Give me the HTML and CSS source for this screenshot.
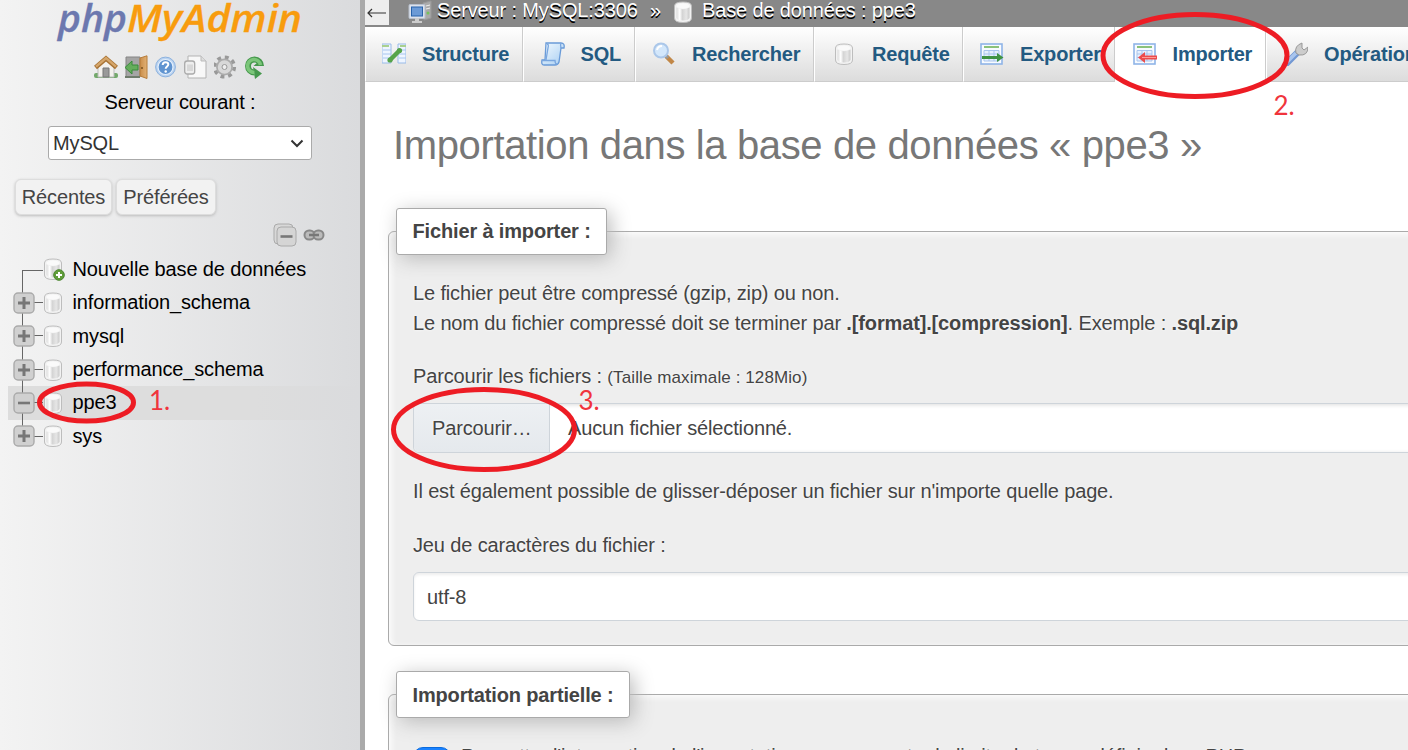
FILE: index.html
```html
<!DOCTYPE html>
<html lang="fr">
<head>
<meta charset="utf-8">
<title>phpMyAdmin</title>
<link rel="stylesheet" href="styles.css">
</head>
<body>
<svg class="defs" width="0" height="0">
  <defs>
    <linearGradient id="cyl" x1="0" x2="1"><stop offset="0" stop-color="#dcdcdc"/><stop offset=".25" stop-color="#fff"/><stop offset=".45" stop-color="#d4d4d4"/><stop offset=".75" stop-color="#e6e6e6"/><stop offset="1" stop-color="#cacaca"/></linearGradient>
    <linearGradient id="blue" x1="0" x2="1" y2="1"><stop offset="0" stop-color="#f4fbff"/><stop offset="1" stop-color="#a6cdf2"/></linearGradient>
    <linearGradient id="door" x1="0" x2="1"><stop offset="0" stop-color="#c98d4a"/><stop offset="1" stop-color="#e2b276"/></linearGradient>
    <symbol id="db" viewBox="0 0 24 24"><path d="M3.500 6Q3.500 2 12 2T20.500 6V18Q20.500 22.500 12 22.500T3.500 18Z" fill="#f2f2f2" stroke="#bdbdbd"/><path d="M5.500 7.500Q12 11 18.500 7.500V18Q17 20.500 12 20.500T5.500 18Z" fill="url(#cyl)"/><ellipse cx="12" cy="6" rx="6.500" ry="2.600" fill="#fafafa"/></symbol>
    <symbol id="plus" viewBox="0 0 22 22"><rect x="1" y="1" width="20" height="20" rx="4" fill="#d0d0d0" stroke="#aaa" stroke-width="1.400"/><path d="M5 11H17M11 5V17" stroke="#777" stroke-width="3"/></symbol>
    <symbol id="minus" viewBox="0 0 22 22"><rect x="1" y="1" width="20" height="20" rx="4" fill="#d0d0d0" stroke="#aaa" stroke-width="1.400"/><path d="M5 11H17" stroke="#777" stroke-width="2.600"/></symbol>
    <symbol id="sheet" viewBox="0 0 24 24"><rect x="1" y="2" width="21" height="20" fill="#f8fbff" stroke="#8fb5e8" stroke-width="1.600"/><path d="M4 5H19" stroke="#8bc27b" stroke-width="2"/><path d="M4 8.500H19V19H4ZM4 12H19M4 15.500H19M9 8.500V19M14 8.500V19" stroke="#a9c5ee" fill="#e6f0fd"/></symbol>
  </defs>
</svg>
<div class="app">
  <aside class="sidebar">
    <svg class="logo" width="360" height="42" viewBox="0 0 360 42"><text class="php" x="58" y="31.500" textLength="69" lengthAdjust="spacingAndGlyphs">php</text><text class="adm" x="127" y="31.500" textLength="175" lengthAdjust="spacingAndGlyphs">MyAdmin</text></svg>
    <div class="tools">
      <svg viewBox="0 0 24 24"><rect x="0" y="18" width="24" height="5" rx="2" fill="#73a96b"/><path d="M4 11L12 4L20 11V22H4Z" fill="#f3f1ed" stroke="#bbb"/><path d="M9 13H15V22H9Z" fill="#999" stroke="#777"/><path d="M1.500 12.500L12 3.500L22.500 12.500" fill="none" stroke="#a87335" stroke-width="4.500"/><path d="M2 11.700L12 3L22 11.700" fill="none" stroke="#d5a66b" stroke-width="2.400"/></svg>
      <svg viewBox="0 0 24 24"><path d="M2 2H16V22H2Z" fill="#a5a5a5" stroke="#858585"/><path d="M1 21H16V23H1Z" fill="#6f7c6c"/><path d="M1 12.500L8 6V10H14V15H8V19Z" fill="#64ad5b" stroke="#388b3b"/><path d="M16 3L23 .8V23.500L16 21Z" fill="url(#door)" stroke="#b67c3b"/><circle cx="18" cy="13" r="1" fill="#77501e"/></svg>
      <svg viewBox="0 0 24 24"><circle cx="11.500" cy="12" r="9.900" fill="#b9d2ef" stroke="#8db2df"/><circle cx="11.500" cy="12" r="7.500" fill="#6094d0" stroke="#e4effc" stroke-width="1.200"/><path d="M8.700 10Q8.700 7.200 11.500 7.200T14.300 9.500C14.300 11.400 11.700 11.500 11.700 13.700" fill="none" stroke="#fff" stroke-width="2"/><circle cx="11.700" cy="16.500" r="1.200" fill="#fff"/></svg>
      <svg viewBox="0 0 24 24"><path d="M4 1H17L22 6V23H4Z" fill="#f8f8f8" stroke="#b3b3b3"/><path d="M17 1V6H22" fill="#ddd" stroke="#bbb"/><rect x=".7" y="6" width="10" height="13" rx="2.500" fill="#eee" stroke="#aaa" stroke-width="1.300"/><path d="M4 9.500V16M6 9.500V16M8 9.500V16" stroke="#ccc" stroke-width="1.300"/></svg>
      <svg viewBox="0 0 24 24"><g transform="translate(-1.500 0)"><circle cx="12" cy="12" r="9.800" fill="none" stroke="#999" stroke-width="3.600" stroke-dasharray="3.850 3.850"/><circle cx="12" cy="12" r="7.200" fill="#ddd" stroke="#ababab" stroke-width="2.500"/><circle cx="12" cy="12" r="5.500" fill="#d8d8d8" stroke="#d8d8d8" stroke-width="2.500"/><circle cx="12" cy="12" r="2.500" fill="#eee" stroke="#999"/></g></svg>
      <svg viewBox="0 0 24 24"><g transform="translate(-2 0)"><path d="M19 11A6.500 6.500 0 1 0 12.500 17.500" fill="none" stroke="#45984c" stroke-width="6"/><path d="M11 12L20 18.500L13 24ZM22 11H11.500L16 7Z" fill="#45984c"/><path d="M18.500 10A6.500 6.500 0 1 0 12.500 17.500" fill="none" stroke="#7cc67a" stroke-width="3.600"/></g></svg>
    </div>
    <div class="server-label">Serveur courant :</div>
    <div class="server-select">MySQL<svg width="14" height="9" viewBox="0 0 14 9"><path d="M1.500 1.500L7 7L12.500 1.500" fill="none" stroke="#333" stroke-width="2"/></svg></div>
    <div class="quick"><span>Récentes</span><span>Préférées</span></div>
    <div class="tree-tools">
      <svg width="24" height="24" viewBox="0 0 24 24"><rect x="1" y="1" width="19" height="20" rx="4" fill="#d8d8d8" stroke="#aaa"/><rect x="4" y="4" width="19" height="19" rx="4" fill="#d5d5d5" stroke="#aaa"/><path d="M7.500 13.500H19.500" stroke="#777" stroke-width="2.600"/></svg>
      <svg width="22" height="12" viewBox="0 0 22 12"><rect x="1.500" y="1.500" width="10" height="9" rx="4.500" fill="#bbb" stroke="#888" stroke-width="2"/><rect x="10.500" y="1.500" width="10" height="9" rx="4.500" fill="#bbb" stroke="#888" stroke-width="2"/><path d="M6 6H16" stroke="#777" stroke-width="2.500"/></svg>
    </div>
    <ul class="tree">
      <li class="first"><i class="branch"><svg></svg></i><span class="dbi"><svg class="ic"><use href="#db"/></svg><svg class="badge" width="12" height="12" viewBox="0 0 12 12"><circle cx="6" cy="6" r="5.300" fill="#609d39" stroke="#4b8530"/><path d="M3 6H9M6 3V9" stroke="#fff" stroke-width="2"/></svg></span>Nouvelle base de données</li>
      <li><i class="branch"><svg><use href="#plus"/></svg></i><span class="dbi"><svg class="ic"><use href="#db"/></svg></span>information_schema</li>
      <li><i class="branch"><svg><use href="#plus"/></svg></i><span class="dbi"><svg class="ic"><use href="#db"/></svg></span>mysql</li>
      <li><i class="branch"><svg><use href="#plus"/></svg></i><span class="dbi"><svg class="ic"><use href="#db"/></svg></span>performance_schema</li>
      <li class="current"><i class="branch"><svg><use href="#minus"/></svg></i><span class="dbi"><svg class="ic"><use href="#db"/></svg></span>ppe3</li>
      <li class="last"><i class="branch"><svg><use href="#plus"/></svg></i><span class="dbi"><svg class="ic"><use href="#db"/></svg></span>sys</li>
    </ul>
  </aside>
  <div class="resizer"></div>
  <main class="main">
    <header class="crumbs">
      <span class="back"><svg width="20" height="10" viewBox="0 0 20 10"><path d="M1 5H19M5 1L1 5L5 9" fill="none" stroke="#333" stroke-width="1.200"/></svg></span>
      <svg class="ic server" viewBox="0 0 24 24"><path d="M15 3L23 1V18L16 20Z" fill="#aaa" stroke="#999"/><path d="M18 6L22 5M18 9L22 8" stroke="#eee"/><circle cx="20" cy="13" r="1.500" fill="#74c35c"/><rect x="1" y="4.500" width="16" height="14" rx="1" fill="#dce2ec" stroke="#b7bfcc"/><rect x="3.500" y="7" width="11" height="9" fill="#6b9ad6" stroke="#2863ab"/><path d="M7 18H11V21H14V23H4V21H7Z" fill="#ccc"/></svg>
      <span class="c1">Serveur : MySQL:3306</span><span class="sep">»</span>
      <svg class="ic dbc"><use href="#db"/></svg><span class="c2">Base de données : ppe3</span>
    </header>
    <nav class="tabs">
      <a class="t1"><svg viewBox="0 0 24 24"><path d="M0 2H9V21H0ZM16 2H24V21H16Z" fill="#eef5ff" stroke="#9abbe8"/><path d="M0 4H7M18 4H24" stroke="#a9d08f" stroke-width="2"/><path d="M1 8H9M1 12H9M1 16H9M17 8H24M17 12H24M17 16H24" stroke="#a8c6ef"/><path d="M8 18L18 8" stroke="#56a44b" stroke-width="4.500"/><circle cx="8" cy="18" r="2.600" fill="#56a44b"/><circle cx="17.500" cy="8.500" r="2.600" fill="#56a44b"/></svg>Structure</a>
      <a class="t2"><svg viewBox="0 0 24 24"><path d="M5 1H20Q24 1 23 6H20L18 20Q17 23 14 23H3Q0 23 1 18H4Z" fill="url(#blue)" stroke="#6a9bd8" stroke-width="1.300"/><path d="M1 18.500H14Q14 22 16 22M6 2Q8 2 7 6L5 18M20 6Q19 3 20 1" fill="none" stroke="#79a6df" stroke-width="1.300"/></svg>SQL</a>
      <a class="t3"><svg viewBox="0 0 24 24"><path d="M14 14L21 21" stroke="#c18747" stroke-width="4.500"/><path d="M13 13L16 16" stroke="#999" stroke-width="3"/><circle cx="9" cy="8.500" r="7" fill="#d3e7fb" stroke="#abc7e9" stroke-width="2"/><path d="M5 8Q6 4 10 4" fill="none" stroke="#fff" stroke-width="2"/></svg>Rechercher</a>
      <a class="t4"><svg><use href="#db"/></svg>Requête</a>
      <a class="t5"><svg viewBox="0 0 24 24"><use href="#sheet" width="24" height="24"/><path d="M2 14H17V11L23.500 15.500L17 20V17H2Z" fill="#409344"/></svg>Exporter</a>
      <a class="t6"><svg viewBox="0 0 24 24"><use href="#sheet" width="24" height="24"/><path d="M24 13.500H12V10L5 15.500L12 21V17.500H24Z" fill="#ec4c4c"/><path d="M9 15.500H23" stroke="#ff9b94"/></svg>Importer</a>
      <a class="t7"><svg viewBox="0 0 24 24"><path d="M3 21L13 11" stroke="#7298d3" stroke-width="6.500" stroke-linecap="round"/><path d="M3 20L12 11" stroke="#a9c5ee" stroke-width="3.600"/><path d="M12 11Q10 4 18 1V6L20 8L24 5Q24 14 15 13Z" fill="#ccc" stroke="#999"/></svg>Opérations</a>
    </nav>
    <section class="content">
      <h1>Importation dans la base de données « ppe3 »</h1>
      <div class="panel panel-file">
        <div class="legend lg1">Fichier à importer :</div>
        <p class="l1">Le fichier peut être compressé (gzip, zip) ou non.<br>Le nom du fichier compressé doit se terminer par <b>.[format].[compression]</b>. Exemple : <b>.sql.zip</b></p>
        <p class="browse">Parcourir les fichiers : <small>(Taille maximale : 128Mio)</small></p>
        <div class="file"><span class="choose">Parcourir…</span><span class="none">Aucun fichier sélectionné.</span></div>
        <p class="drop">Il est également possible de glisser-déposer un fichier sur n'importe quelle page.</p>
        <p class="charset">Jeu de caractères du fichier :</p>
        <div class="select">utf-8</div>
      </div>
      <div class="panel panel-partial">
        <div class="legend lg2">Importation partielle :</div>
        <div class="toggle-row"><span class="toggle"></span><span class="toggle-text">Permettre l'interruption de l'importation pour respecter la limite de temps définie dans PHP</span></div>
      </div>
    </section>
  </main>
</div>
<svg class="marks" width="1408" height="750" viewBox="0 0 1408 750">
  <g fill="none" stroke="#ed1c24" stroke-width="5"><ellipse cx="86.500" cy="402.500" rx="47" ry="18.500"/><ellipse cx="1195" cy="55.500" rx="92" ry="41"/><ellipse cx="484" cy="429.500" rx="90.500" ry="40"/></g>
  <g class="nums"><text x="149" y="409.500">1.</text><text x="1273.500" y="114.500">2.</text><text x="578.500" y="409.500">3.</text></g>
</svg>
</body>
</html>
```
FILE: styles.css
```css
* { box-sizing: border-box; }
body { margin: 0; font: 20px/30px "Liberation Sans", Arial, sans-serif; letter-spacing: -0.140px; color: #444; background: #fff; overflow: hidden; }
p, h1, ul { margin: 0; padding: 0; }
.defs { display: block; position: absolute; }
.app { display: flex; height: 750px; overflow: hidden; }
.sidebar { width: 360px; flex: none; background: linear-gradient(to right, #f3f3f3, #dadbdd); color: #000; }
.resizer { width: 5px; flex: none; background: #aaa; }
.main { flex: 1; min-width: 0; }
.logo { display: block; font: italic 600 37px "Open Sans", sans-serif; letter-spacing: 0; }
.php { fill: #6c78af; stroke: #6c78af; stroke-width: .3; }
.adm { fill: #f89c0e; stroke: #f89c0e; stroke-width: .3; }
.tools { height: 44px; padding: 13px 0 0 94px; display: flex; gap: 6px; }
.tools svg { width: 24px; height: 24px; }
.server-label { height: 40px; line-height: 33px; text-align: center; }
.server-select { margin: 0 48px; height: 34px; background: #fff; border: 1px solid #aaa; border-radius: 3px; color: #333; display: flex; justify-content: space-between; align-items: center; padding: 0 7px 0 4px; }
.quick { margin: 19px 0 0 15px; display: flex; gap: 4px; color: #444; }
.quick span { height: 36px; line-height: 34px; border: 1px solid #ddd; border-radius: 6px; background: #f2f2f2; text-align: center; box-shadow: 0 1px 3px #bbb; width: 97px; }
.quick span + span { width: 100px; }
.tree-tools { display: flex; align-items: center; gap: 6px; padding-left: 273px; height: 24px; margin-top: 8px; }
.tree { list-style: none; margin: 5.700px 0 0 8px; }
.tree li { height: 33.400px; line-height: 33px; display: flex; align-items: center; }
.branch { width: 35px; height: 33.400px; flex: none; display: flex; align-items: center; padding-left: 5px; background: linear-gradient(#666, #666) 14px 0 / 1px 100% no-repeat, linear-gradient(#666, #666) 14px 16px / 21px 1px no-repeat; }
.branch svg { width: 22px; height: 22px; }
.first .branch { background-position: 14px 17px, 14px 17px; }
.last .branch { background-size: 1px 17px, 21px 1px; }
.dbi { width: 29.500px; height: 24px; position: relative; flex: none; margin-left: -2px; margin-right: 2px; }
.ic { width: 24px; height: 24px; display: block; }
.badge { position: absolute; left: 12px; top: 12px; }
.current { background: linear-gradient(to right, #ddd 70%, #dadbdd); }
.crumbs { height: 27px; background: #888; display: flex; align-items: flex-start; color: #fff; text-shadow: 0 1.500px 0 #000; line-height: 20px; white-space: nowrap; }
.back { width: 24px; height: 25px; background: #eee; display: flex; align-items: center; justify-content: center; flex: none; }
.server { margin: 0 5px 0 19px; flex: none; }
.c1 { width: 201px; }
.sep { margin: 0 9px 0 12px; width: 12px; }
.dbc { margin-right: 7px; flex: none; }
.tabs { display: flex; height: 55px; width: 1200px; letter-spacing: -0.180px; }
.tabs a { flex: none; display: flex; align-items: center; padding-left: 17px; font-weight: bold; color: #235a81; background: linear-gradient(#fff, #dcdcdc); border-right: 1px solid #ccc; border-bottom: 1px solid #ccc; border-left: 1px solid #fff; white-space: nowrap; }
.tabs svg { width: 24px; height: 24px; margin-right: 16px; flex: none; }
.tabs .t1 { width: 158px; padding-left: 16px; }
.tabs .t2 { width: 112px; padding-left: 16.500px; }
.tabs .t3 { width: 179px; padding-left: 16px; }
.tabs .t4 { width: 149px; }
.tabs .t5 { width: 152px; padding-left: 16px; }
.tabs .t6 { width: 151px; padding-left: 16.500px; background: #fff; border-bottom-color: #fff; }
.tabs .t7 { width: 170px; }
.content { padding: 0 0 0 23px; }
h1 { font-weight: normal; font-size: 40px; letter-spacing: -0.370px; line-height: 46px; color: #777; padding: 40px 0 0 5px; height: 149px; white-space: nowrap; }
.panel { width: 1100px; border: 1px solid #aaa; border-radius: 6px 0 0 6px; background: #eee; box-shadow: inset 2px 2px 6px #fff; padding-left: 24px; text-shadow: 0 0 3px #fff; }
.panel-file { height: 415px; }
.panel-partial { margin-top: 48px; height: 120px; }
.legend { height: 47px; margin: -24px 0 0 -17px; border: 1px solid #aaa; border-radius: 3px; background: #fff; font-weight: bold; line-height: 45px; padding-left: 15.500px; box-shadow: 4px 4px 20px #bbb; white-space: nowrap; letter-spacing: -0.150px; }
.lg1 { width: 211px; }
.lg2 { width: 234px; line-height: 47px; }
.l1 { padding-top: 23px; white-space: nowrap; }
.browse { padding-top: 23px; height: 53px; }
small { font-size: 17px; letter-spacing: .100px; }
.file { margin-top: 12px; height: 50px; border: 1px solid #ced4da; border-radius: 6px; background: #fff; display: flex; line-height: 48px; box-shadow: inset 0 1px 4px #ddd; }
.choose { width: 136px; padding-left: 18px; background: linear-gradient(#edf0f3, #e5e9ed); border-right: 1px solid #ced4da; border-radius: 6px 0 0 6px; }
.none { padding-left: 18px; }
.drop { padding-top: 23px; }
.charset { padding-top: 24px; }
.select { margin-top: 12px; height: 49px; border: 1px solid #ced4da; border-radius: 6px; background: #fff; padding-left: 13px; line-height: 48px; box-shadow: inset 0 2px 3px #eee; }
.toggle-row { display: flex; align-items: flex-start; gap: 10px; padding-top: 23px; white-space: nowrap; }
.toggle { width: 38px; height: 20px; margin-top: 6px; border-radius: 10px; background: #1a82ff; border: 1px solid #0b6bdd; }
.marks { position: absolute; left: 0; top: 0; letter-spacing: 0; }
.nums { font: 26px Lato, sans-serif; fill: #f0343c; }
```
